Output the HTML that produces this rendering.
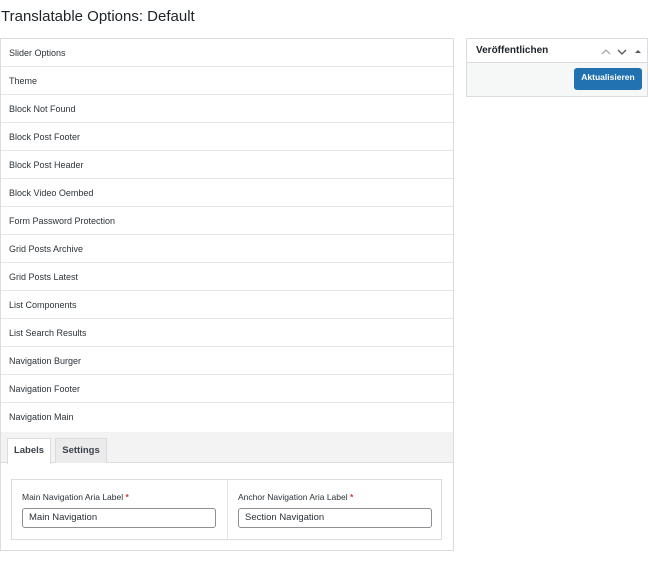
<!DOCTYPE html>
<html><head><meta charset="utf-8"><style>
*{box-sizing:border-box;margin:0;padding:0}
body{width:648px;height:562px;background:#fff;font-family:"Liberation Sans",sans-serif;color:#1d2327;position:relative;overflow:hidden}
h1{position:absolute;left:1px;top:8px;font-size:15px;font-weight:400;color:#1d2327}
.panel{position:absolute;left:0;top:38px;width:454px;height:513px;border:1px solid #dcdcde;background:#fff}
.row{height:28px;border-bottom:1px solid #e6e6e6;font-size:9px;line-height:29px;padding-left:8px;color:#2c3338}
.row.last{border-bottom:none}
.tabs{position:absolute;left:0;top:393px;width:452px;height:31px;background:#f3f3f3;border-bottom:1px solid #dcdcde}
.tab{position:absolute;top:6px;height:25px;font-size:9.5px;line-height:24px;text-align:center;border:1px solid #dcdcde;border-bottom:none;font-weight:bold;color:#3c434a}
.inner{position:absolute;left:10px;top:440px;width:431px;height:61px;border:1px solid #dcdcde}
.col{position:absolute;top:0;height:59px;font-size:8.5px;color:#2c3338}
.col label{position:absolute;left:10px;top:12px}
.col label b{color:#d63638}
.inp{position:absolute;left:10px;top:28px;width:194px;height:20px;border:1px solid #8c8f94;border-radius:3px;font-size:9.5px;line-height:18px;padding-left:6px;color:#2c3338}
.side{position:absolute;left:466px;top:38px;width:182px;height:59px;border:1px solid #dcdcde}
.sh{height:24px;border-bottom:1px solid #dcdcde;font-size:10px;line-height:23px;padding-left:9px;font-weight:bold;color:#1d2327}
.sf{height:33px;background:#f6f7f7}
.btn{position:absolute;left:107px;top:29px;width:68px;height:22px;background:#2271b1;border-radius:3px;color:#fff;font-size:8.5px;font-weight:bold;text-align:center;line-height:19px}
</style></head><body>
<h1>Translatable Options: Default</h1>
<div class="panel">
<div class="row">Slider Options</div>
<div class="row">Theme</div>
<div class="row">Block Not Found</div>
<div class="row">Block Post Footer</div>
<div class="row">Block Post Header</div>
<div class="row">Block Video Oembed</div>
<div class="row">Form Password Protection</div>
<div class="row">Grid Posts Archive</div>
<div class="row">Grid Posts Latest</div>
<div class="row">List Components</div>
<div class="row">List Search Results</div>
<div class="row">Navigation Burger</div>
<div class="row">Navigation Footer</div>
<div class="row last">Navigation Main</div>
<div class="tabs">
<div class="tab" style="left:6px;width:44px;background:#fff;height:26px">Labels</div>
<div class="tab" style="left:54px;width:52px;background:#ebebeb">Settings</div>
</div>
<div class="inner">
<div class="col" style="left:0;width:216px;border-right:1px solid #e6e6e6"><label>Main Navigation Aria Label <b>*</b></label><div class="inp">Main Navigation</div></div>
<div class="col" style="left:216px;width:214px"><label>Anchor Navigation Aria Label <b>*</b></label><div class="inp">Section Navigation</div></div>
</div>
</div>
<div class="side">
<div class="sh">Veröffentlichen
<svg style="position:absolute;left:134px;top:8px" width="50" height="9" viewBox="0 0 50 9"><path d="M1 7L5 3L9 7" stroke="#a7aaad" stroke-width="1.3" fill="none"/><path d="M17 3L21 7L25 3" stroke="#50575e" stroke-width="1.3" fill="none"/><path d="M34 6L37 3L40 6Z" fill="#50575e"/></svg>
</div>
<div class="sf"></div>
<div class="btn">Aktualisieren</div>
</div>
</body></html>
